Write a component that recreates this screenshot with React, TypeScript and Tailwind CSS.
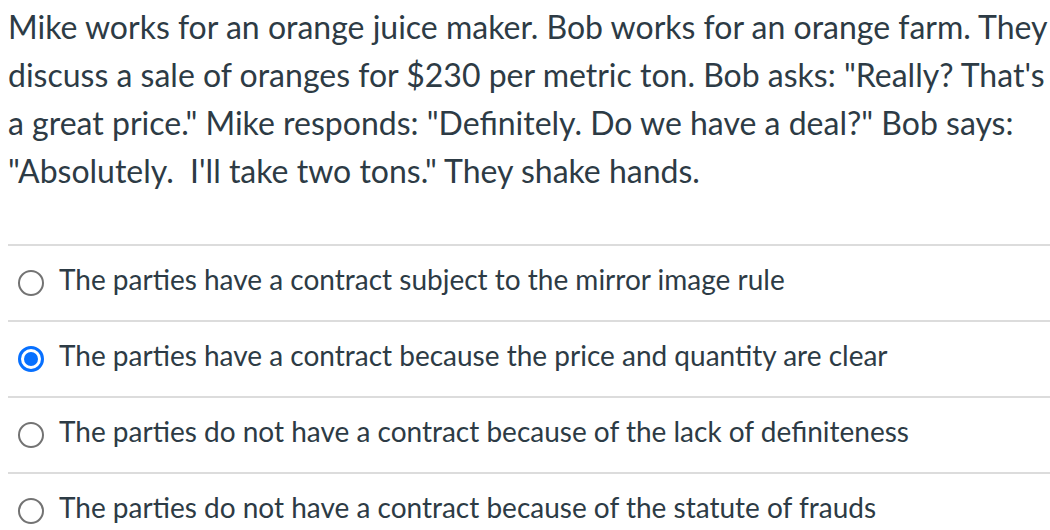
const options = [
  { id: "a", label: "The parties have a contract subject to the mirror image rule" },
  { id: "b", label: "The parties have a contract because the price and quantity are clear" },
  { id: "c", label: "The parties do not have a contract because of the lack of definiteness" },
  { id: "d", label: "The parties do not have a contract because of the statute of frauds" },
];

function Radio({ checked }: { checked: boolean }) {
  if (checked) {
    return (
      <span className="flex h-[26px] w-[26px] shrink-0 items-center justify-center rounded-full border-[3px] border-[#0770ff] bg-white">
        <span className="h-[14px] w-[14px] rounded-full bg-[#0770ff]" />
      </span>
    );
  }
  return <span className="h-[26px] w-[26px] shrink-0 rounded-full border-2 border-[#737373] bg-white" />;
}

export default function App() {
  const selected = "b";

  return (
    <div className="min-h-screen overflow-hidden bg-white font-['Lato','Noto_Sans',sans-serif] text-[#2d3b45]">
      <p className="pl-2 pt-[3px] text-[32px] leading-[48px]">
        Mike works for an orange juice maker. Bob works for an orange farm. They discuss a sale of oranges for $230 per
        metric ton. Bob asks: "Really? That's a great price." Mike responds: "Definitely. Do we have a deal?" Bob says:
        "Absolutely.&nbsp; I'll take two tons." They shake hands.
      </p>

      <ul className="ml-2 mt-[49px]">
        {options.map((option) => (
          <li className="flex h-[76px] items-center gap-[15px] border-t-2 border-[#dcdcdc] pl-[10px]" key={option.id}>
            <Radio checked={option.id === selected} />
            <span className="pb-[8px] text-[28px] leading-[36px]">{option.label}</span>
          </li>
        ))}
      </ul>
    </div>
  );
}
